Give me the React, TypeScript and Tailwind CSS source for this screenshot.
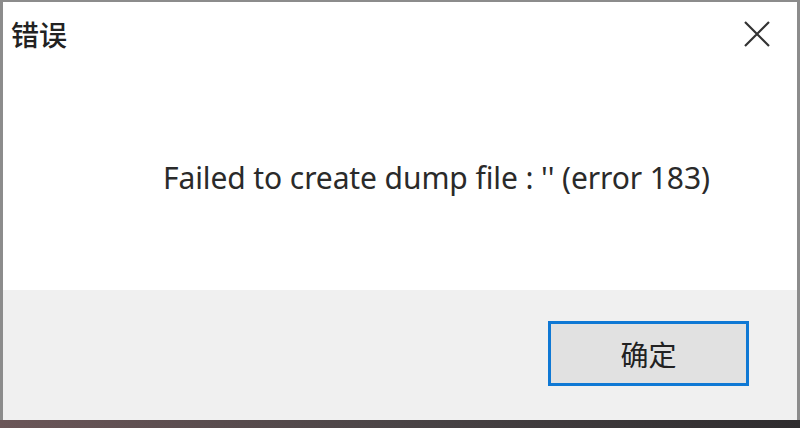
export default function App() {
  return (
    <div className="w-[800px] h-[428px] flex flex-col bg-[#3a3436] overflow-hidden">
      <div className="flex-1 flex flex-col border-l-[3px] border-r-[3px] border-t-[2px] border-[#8c8c8c] bg-white">
        <div className="h-[288px] flex flex-col bg-white">
          <div className="flex items-start justify-between pl-[8px] pr-[26px] pt-[14px]">
            <span className="text-[28px] leading-[36px] text-[#222] font-medium font-['Noto_Sans_CJK_SC',sans-serif]">错误</span>
            <svg width="28" height="28" viewBox="0 0 28 28" className="mt-[4px]">
              <path d="M2 2L26 26M26 2L2 26" stroke="#333" strokeWidth="2.2" />
            </svg>
          </div>
          <div className="pl-[160px] pt-[108px]">
            <p className="text-[30px] leading-[36px] text-[#2a2a2a] font-['Noto_Sans',sans-serif] tracking-[-0.1px]">
              Failed to create dump file : '' (error 183)
            </p>
          </div>
        </div>
        <div className="flex-1 bg-[#f0f0f0] flex justify-end items-start pt-[31px] pr-[48px]">
          <button className="w-[201px] h-[65px] bg-[#e1e1e1] border-[3px] border-[#0f78d4] flex items-center justify-center text-[28px] text-[#222] font-['Noto_Sans_CJK_SC',sans-serif]">
            确定
          </button>
        </div>
      </div>
      <div className="h-[8px] bg-gradient-to-r from-[#6b5658] via-[#4a4446] to-[#2e2c2e]" />
    </div>
  );
}
